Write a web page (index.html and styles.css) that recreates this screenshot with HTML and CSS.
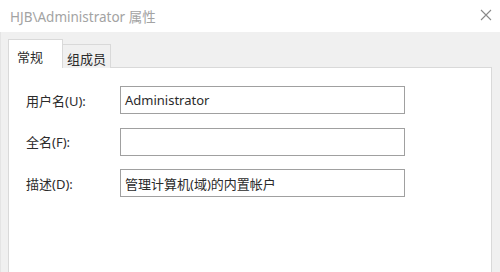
FILE: index.html
```html
<!DOCTYPE html>
<html lang="zh-CN">
<head>
<meta charset="utf-8">
<title>HJB\Administrator 属性</title>
<link rel="stylesheet" href="styles.css">
</head>
<body>
<div class="window">
  <div class="titlebar">
    <span class="title">HJB\Administrator 属性</span>
    <svg class="close" width="12" height="12" viewBox="0 0 12 12"><path d="M1 1 L11 11 M11 1 L1 11" stroke="#8a8a8a" stroke-width="1.1" fill="none"/></svg>
  </div>
  <div class="client">
    <div class="tabs">
      <div class="tab active">常规</div>
      <div class="tab">组成员</div>
    </div>
    <div class="panel">
      <div class="row">
        <label class="label">用户名(U):</label>
        <div class="field">Administrator</div>
      </div>
      <div class="row">
        <label class="label">全名(F):</label>
        <div class="field"></div>
      </div>
      <div class="row">
        <label class="label">描述(D):</label>
        <div class="field">管理计算机(域)的内置帐户</div>
      </div>
    </div>
  </div>
</div>
</body>
</html>
```

FILE: styles.css
```css
html, body {
  margin: 0;
  padding: 0;
  width: 500px;
  height: 272px;
  overflow: hidden;
  background: #ffffff;
}
.window {
  width: 500px;
  height: 272px;
  display: flex;
  flex-direction: column;
  font-family: "Noto Sans", "Noto Sans CJK SC", sans-serif;
  font-size: 13px;
  color: #2b2b2b;
}
.titlebar {
  height: 32px;
  flex: none;
  background: #ffffff;
  display: flex;
  align-items: center;
  justify-content: space-between;
  padding: 0 8px 0 10px;
}
.title {
  color: #a3a3a3;
  font-size: 13.5px;
}
.close {
  margin-top: -2px;
}
.client {
  flex: 1;
  background: #f0f0f0;
  padding: 8px 8px 0 7px;
  display: flex;
  flex-direction: column;
  border-left: 1px solid #e4e4e4;
}
.tabs {
  display: flex;
  align-items: flex-end;
  height: 28px;
  position: relative;
  z-index: 1;
  margin-bottom: -1px;
}
.tab {
  box-sizing: border-box;
  height: 24px;
  width: 48px;
  border: 1px solid #d9d9d9;
  border-bottom: none;
  border-left: none;
  background: #f0f0f0;
  display: flex;
  align-items: center;
  justify-content: center;
  padding-top: 4px;
}
.tab.active {
  height: 29px;
  width: 55px;
  background: #ffffff;
  border-left: 1px solid #d9d9d9;
  justify-content: flex-start;
  padding-left: 8px;
  padding-top: 4px;
}
.panel {
  flex: 1;
  background: #ffffff;
  border: 1px solid #d9d9d9;
  border-bottom: none;
  padding: 18px 16px 0 17px;
  display: flex;
  flex-direction: column;
  gap: 13.5px;
}
.row {
  display: flex;
  align-items: center;
}
.label {
  width: 94px;
  flex: none;
}
.field {
  box-sizing: border-box;
  width: 285px;
  height: 28px;
  border: 1px solid #a0a0a0;
  padding: 0 4px;
  display: flex;
  align-items: center;
  background: #ffffff;
}
```
